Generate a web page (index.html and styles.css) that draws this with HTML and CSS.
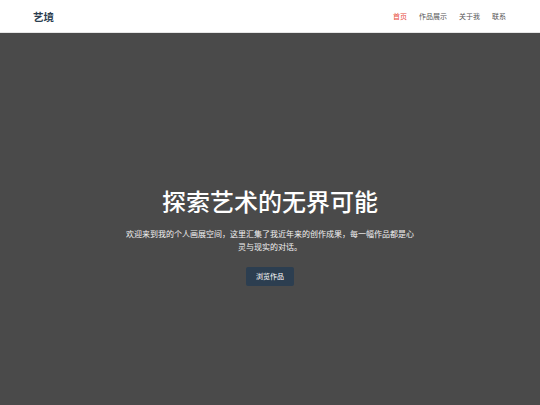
FILE: index.html
```html
<!DOCTYPE html>
<html lang="zh">
<head>
<meta charset="utf-8">
<title>艺境</title>
<link rel="stylesheet" href="styles.css">
</head>
<body>
<header class="site-header">
  <div class="logo">艺境</div>
  <nav class="nav">
    <a class="nav-link active" href="#">首页</a>
    <a class="nav-link" href="#">作品展示</a>
    <a class="nav-link" href="#">关于我</a>
    <a class="nav-link" href="#">联系</a>
  </nav>
</header>
<section class="hero">
  <div class="hero-inner">
    <h1 class="hero-title">探索艺术的无界可能</h1>
    <p class="hero-text">欢迎来到我的个人画展空间，这里汇集了我近年来的创作成果，每一幅作品都是心灵与现实的对话。</p>
    <a class="btn" href="#">浏览作品</a>
  </div>
</section>
</body>
</html>
```
FILE: styles.css
```css
* { box-sizing: border-box; }
html, body { margin: 0; padding: 0; }
body {
  font-family: "Noto Sans CJK SC", "Noto Sans", sans-serif;
  background: #4a4a4a;
  color: #333;
}
.site-header {
  height: 33px;
  background: #fff;
  border-bottom: 1px solid #e6e6e6;
  display: flex;
  align-items: center;
  justify-content: space-between;
  padding: 0 34px 0 33px;
}
.logo {
  font-size: 10.5px;
  font-weight: 700;
  color: #2c3e50;
}
.nav { display: flex; gap: 12px; }
.nav-link {
  font-size: 7px;
  color: #555;
  text-decoration: none;
}
.nav-link.active { color: #e74c3c; }
.hero {
  height: 372px;
  padding-top: 32px;
  background: #4a4a4a;
  display: flex;
  align-items: center;
  justify-content: center;
  text-align: center;
}
.hero-inner {
  display: flex;
  flex-direction: column;
  align-items: center;
}
.hero-title {
  margin: 0 0 11px;
  font-size: 24px;
  font-weight: 500;
  color: #fff;
  line-height: 31px;
}
.hero-text {
  margin: 0 0 14px;
  max-width: 292px;
  font-size: 8px;
  line-height: 13px;
  color: #f2f2f2;
}
.btn {
  display: inline-block;
  background: #2c3e50;
  color: #fff;
  font-size: 7px;
  line-height: 19px;
  padding: 0 10px;
  text-decoration: none;
  border-radius: 2px;
}
```
